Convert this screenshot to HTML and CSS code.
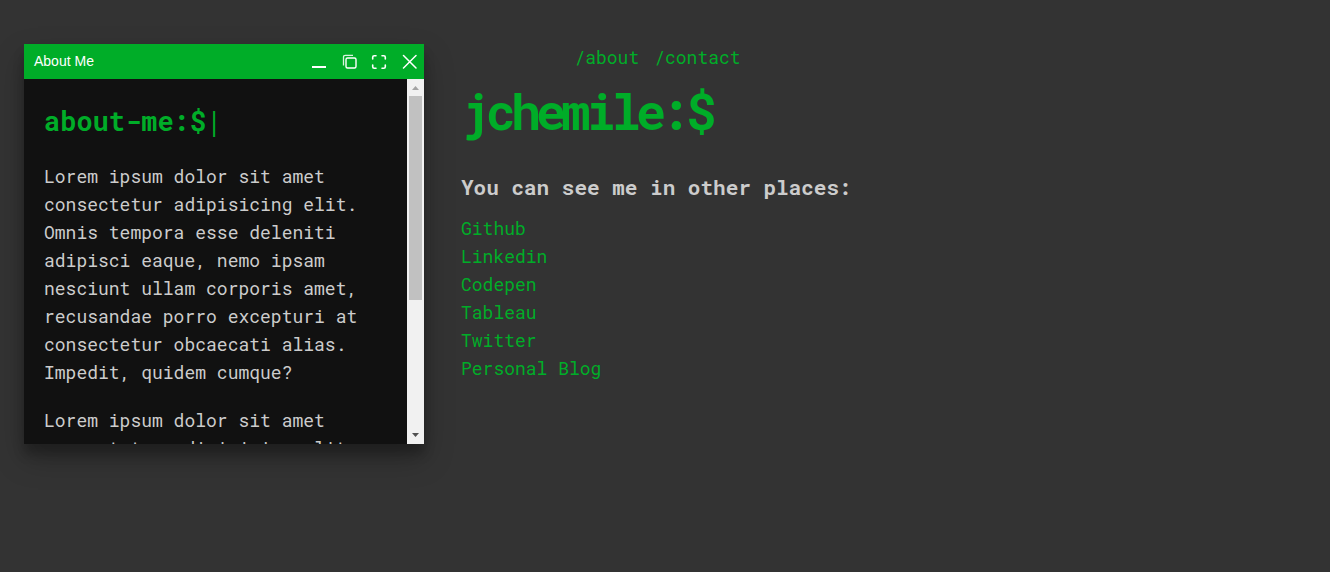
FILE: index.html
```html
<!DOCTYPE html>
<html lang="en">
<head>
<meta charset="utf-8">
<meta name="viewport" content="width=device-width, initial-scale=1">
<title>jchemile</title>
<link rel="stylesheet" href="styles.css">
</head>
<body>
<main class="page">
  <nav class="nav" aria-label="Main">
    <a class="link" href="#about">/about</a>
    <a class="link" href="#contact">/contact</a>
  </nav>
  <h1 class="title">jchemile:$</h1>
  <h2 class="subtitle">You can see me in other places:</h2>
  <ul class="places">
    <li><a class="link" href="#github">Github</a></li>
    <li><a class="link" href="#linkedin">Linkedin</a></li>
    <li><a class="link" href="#codepen">Codepen</a></li>
    <li><a class="link" href="#tableau">Tableau</a></li>
    <li><a class="link" href="#twitter">Twitter</a></li>
    <li><a class="link" href="#blog">Personal Blog</a></li>
  </ul>
</main>

<section class="window" id="about" aria-label="About Me">
  <header class="window-bar">
    <span class="window-title">About Me</span>
    <div class="window-controls">
      <button class="control" type="button" aria-label="Minimize">
        <svg width="16" height="16" viewBox="0 0 16 16"><path d="M1 12h14v2H1z" fill="#fff"/></svg>
      </button>
      <button class="control" type="button" aria-label="Maximize">
        <svg width="16" height="16" viewBox="0 0 16 16" fill="none" stroke="#fff"><rect x="5" y="4" width="10" height="10" rx="1.5" stroke-width="1.4"/><path d="M2.500 11.500V3Q2.500 1.300 4.300 1.300H12" stroke-width="1.300" opacity=".85"/></svg>
      </button>
      <button class="control" type="button" aria-label="Full screen">
        <svg width="16" height="16" viewBox="0 0 16 16" fill="none" stroke="#fff" stroke-width="1.6" stroke-linecap="round"><path d="M1.700 5V3.200Q1.700 1.700 3.200 1.700H5M11 1.700H12.800Q14.300 1.700 14.300 3.200V5M14.300 11V12.800Q14.300 14.300 12.800 14.300H11M5 14.300H3.200Q1.700 14.300 1.700 12.800V11"/></svg>
      </button>
      <button class="control" type="button" aria-label="Close">
        <svg width="16" height="16" viewBox="0 0 16 16" stroke="#fff" stroke-width="1.5" stroke-linecap="round"><path d="M2.500 1.500 15 14M15 1.500 2.500 14"/></svg>
      </button>
    </div>
  </header>
  <div class="window-body">
    <div class="window-content">
      <h2 class="prompt">about-me:$<span class="cursor">|</span></h2>
      <p class="text">Lorem ipsum dolor sit amet consectetur adipisicing elit. Omnis tempora esse deleniti adipisci eaque, nemo ipsam nesciunt ullam corporis amet, recusandae porro excepturi at consectetur obcaecati alias. Impedit, quidem cumque?</p>
      <p class="text">Lorem ipsum dolor sit amet consectetur adipisicing elit.</p>
    </div>
    <div class="scrollbar" aria-hidden="true">
      <svg class="arrow" width="17" height="17" viewBox="0 0 17 17"><path d="M5 11 8.5 7 12 11z" fill="#a3a3a3"/></svg>
      <div class="thumb"></div>
      <svg class="arrow arrow-down" width="17" height="17" viewBox="0 0 17 17"><path d="M5 6h7L8.500 10z" fill="#505050"/></svg>
    </div>
  </div>
</section>
</body>
</html>
```
FILE: styles.css
```css
:root {
  --green: #00ad28;
  --grey: #ccc;
}

* {
  box-sizing: border-box;
}

body {
  margin: 0;
  background: #333;
  color: var(--grey);
  font: 18px/28px "Roboto Mono", "DejaVu Sans Mono", "Liberation Mono", monospace;
}

h1, h2, p, ul {
  margin: 0;
  padding: 0;
}

.link {
  color: var(--green);
  text-decoration: none;
}

.page {
  max-width: 408px;
  margin: 0 auto;
  padding-top: 43px;
}

.nav {
  display: flex;
  justify-content: center;
}

.nav .link {
  margin-right: 15px;
}

.title {
  color: var(--green);
  font-size: 50px;
  line-height: 80px;
  letter-spacing: -5px;
}

.subtitle {
  margin-top: 20px;
  font-size: 21px;
  line-height: 32px;
  white-space: nowrap;
}

.places {
  margin-top: 11px;
  list-style: none;
}

.window {
  position: absolute;
  top: 44px;
  left: 24px;
  display: flex;
  flex-direction: column;
  width: 400px;
  height: 400px;
  background: #111;
  box-shadow: 0 14px 28px rgba(0, 0, 0, .25), 0 10px 10px rgba(0, 0, 0, .22);
}

.window-bar {
  display: flex;
  align-items: center;
  justify-content: space-between;
  height: 35px;
  padding: 0 0 0 10px;
  background: var(--green);
  color: #fff;
  font: 14px/35px "Liberation Sans", Arial, sans-serif;
}

.window-controls {
  display: flex;
}

.control {
  display: flex;
  align-items: center;
  justify-content: center;
  width: 30px;
  height: 35px;
  padding: 0;
  border: 0;
  background: none;
}

.window-body {
  display: flex;
  flex: 1;
  min-height: 0;
}

.window-content {
  flex: 1;
  padding: 20px;
  overflow: hidden;
}

.prompt {
  color: var(--green);
  font-size: 27px;
  line-height: 43px;
}

.cursor {
  font-weight: 400;
}

.text {
  margin: 20px 0;
}

.scrollbar {
  display: flex;
  flex-direction: column;
  width: 17px;
  background: #f1f1f1;
}

.thumb {
  height: 204px;
  margin: 0 2px;
  background: #c1c1c1;
}

.arrow-down {
  margin-top: auto;
}
```
